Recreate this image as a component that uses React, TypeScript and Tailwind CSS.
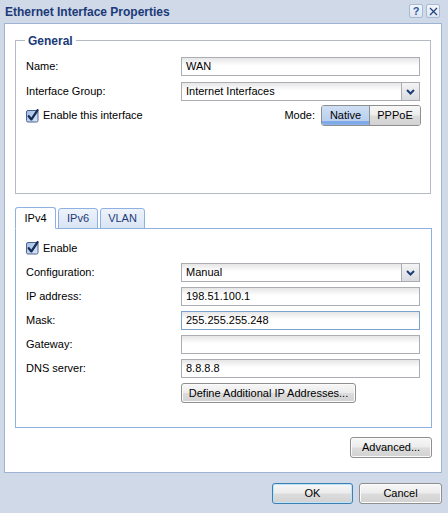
import React from "react";

const inputCls =
  "h-[19px] w-[239px] border border-[#abadb3] bg-[linear-gradient(to_bottom,#e6e6e6,#ffffff_45%)] pl-[4px] flex items-center text-black";

const buttonCls =
  "flex items-center justify-center rounded-[3px] border border-[#8e8f8f] bg-[linear-gradient(to_bottom,#f7f7f7_0%,#ececec_48%,#dcdcdc_52%,#d2d2d2_100%)] shadow-[inset_0_0_0_1px_#fbfbfb] text-black";

function CheckBox() {
  return (
    <svg width="14" height="14" viewBox="0 0 14 14" className="shrink-0">
      <defs>
        <linearGradient id="cb" x1="0" y1="0" x2="1" y2="1">
          <stop offset="0" stopColor="#9fbbe4" />
          <stop offset="1" stopColor="#dce8f7" />
        </linearGradient>
      </defs>
      <rect x="0.5" y="1.5" width="11.5" height="11.5" rx="1.5" fill="url(#cb)" stroke="#4a6591" />
      <path d="M2.8 7.2 L5.4 10.4 L11.6 1.2" stroke="#172c57" strokeWidth="2.3" fill="none" strokeLinecap="round" strokeLinejoin="round" />
    </svg>
  );
}

function Select({ value }: { value: string }) {
  return (
    <div className="flex h-[19px] w-[239px] border border-[#abadb3] bg-[linear-gradient(to_bottom,#e6e6e6,#ffffff_45%)]">
      <div className="flex flex-1 items-center pl-[4px] text-black">{value}</div>
      <div className="flex w-[18px] items-center justify-center border-l border-[#abadb3] bg-[linear-gradient(to_bottom,#f4f4f4,#d9dbe0)]">
        <svg width="9" height="6" viewBox="0 0 9 6">
          <path d="M1 1 L4.5 4.5 L8 1" stroke="#1d3c78" strokeWidth="2" fill="none" />
        </svg>
      </div>
    </div>
  );
}

function Row({ label, children, className = "" }: { label: string; children: React.ReactNode; className?: string }) {
  return (
    <div className={`flex items-center ${className}`}>
      <div className="w-[155px] text-black">{label}</div>
      {children}
    </div>
  );
}

export default function App() {
  return (
    <div className="h-[513px] w-[448px] overflow-hidden bg-[#cfd9e7] font-['Liberation_Sans',Arial,sans-serif] text-[11px]">
      {/* Title bar */}
      <div className="flex h-[23px] items-start justify-between pl-[5px] pr-[8px]">
        <div className="pt-[3px] text-[12px] font-bold text-[#1b3a78]">Ethernet Interface Properties</div>
        <div className="flex gap-[3px] pt-[4px]">
          <div className="flex h-[14px] w-[14px] items-center justify-center rounded-[2px] border border-[#a8b9d3] bg-[linear-gradient(to_bottom,#f3f6fb,#dce5f2)] text-[11px] font-bold leading-none text-[#2c5aa8]">
            ?
          </div>
          <div className="flex h-[14px] w-[14px] items-center justify-center rounded-[2px] border border-[#a8b9d3] bg-[linear-gradient(to_bottom,#f3f6fb,#dce5f2)]">
            <svg width="9" height="9" viewBox="0 0 9 9">
              <path d="M1 1 L8 8 M8 1 L1 8" stroke="#1f3f7a" strokeWidth="1.2" />
            </svg>
          </div>
        </div>
      </div>

      {/* Main panel */}
      <div className="ml-[4px] flex h-[450px] w-[438px] flex-col border border-[#9fb3d2] bg-white">
        {/* General */}
        <div className="relative ml-[10px] mt-[16px] h-[154px] w-[416px] border border-[#b5bac4] pl-[10px] pt-[16px]">
          <div className="absolute -top-[9px] left-[9px] bg-white px-[3px] text-[12px] font-bold text-[#1b3a78]">
            General
          </div>
          <Row label="Name:">
            <div className={inputCls}>WAN</div>
          </Row>
          <Row label="Interface Group:" className="mt-[6px]">
            <Select value="Internet Interfaces" />
          </Row>
          <div className="mt-[4px] flex h-[21px] items-center">
            <CheckBox />
            <span className="ml-[3px] text-black">Enable this interface</span>
            <div className="ml-auto mr-[9px] flex items-center">
              <span className="mr-[6px] text-black">Mode:</span>
              <div className="flex h-[21px] overflow-hidden rounded-[3px] border border-[#8e8f8f]">
                <div className="flex w-[48px] items-center justify-center border-r border-[#8e8f8f] bg-[linear-gradient(to_bottom,#cfdff3_0%,#b9cfee_80%,#76a3e6_82%,#8fb4ea_100%)] text-black">
                  Native
                </div>
                <div className="flex w-[50px] items-center justify-center bg-[linear-gradient(to_bottom,#f7f7f7_0%,#ececec_48%,#dcdcdc_52%,#d2d2d2_100%)] text-black">
                  PPPoE
                </div>
              </div>
            </div>
          </div>
        </div>

        {/* Tabs */}
        <div className="relative z-10 ml-[10px] mt-[13px] flex h-[22px] items-end gap-[2px] -mb-px">
          <div className="flex h-[22px] w-[41px] items-center justify-center rounded-t-[3px] border border-b-white border-[#8fb0e2] bg-white text-black">
            IPv4
          </div>
          <div className="flex h-[21px] w-[40px] items-center justify-center rounded-t-[3px] border border-[#8fb0e2] bg-[linear-gradient(to_bottom,#eef3fb,#d9e4f4)] text-[#1b3a78]">
            IPv6
          </div>
          <div className="flex h-[21px] w-[45px] items-center justify-center rounded-t-[3px] border border-[#8fb0e2] bg-[linear-gradient(to_bottom,#eef3fb,#d9e4f4)] text-[#1b3a78]">
            VLAN
          </div>
        </div>
        <div className="ml-[10px] h-[200px] w-[417px] border border-[#8fb0e2] pl-[10px] pt-[12px]">
          <div className="flex h-[14px] items-center">
            <CheckBox />
            <span className="ml-[3px] text-black">Enable</span>
          </div>
          <Row label="Configuration:" className="mt-[8px]">
            <Select value="Manual" />
          </Row>
          <Row label="IP address:" className="mt-[5px]">
            <div className={inputCls}>198.51.100.1</div>
          </Row>
          <Row label="Mask:" className="mt-[5px]">
            <div className={`${inputCls} !border-[#7da2ce]`}>255.255.255.248</div>
          </Row>
          <Row label="Gateway:" className="mt-[5px]">
            <div className={inputCls}></div>
          </Row>
          <Row label="DNS server:" className="mt-[5px]">
            <div className={inputCls}>8.8.8.8</div>
          </Row>
          <div className="mt-[5px] flex">
            <div className="w-[155px]" />
            <div className={`${buttonCls} h-[20px] w-[175px]`}>Define Additional IP Addresses...</div>
          </div>
        </div>

        <div className="mt-[9px] flex w-[427px] justify-end">
          <div className={`${buttonCls} h-[21px] w-[82px]`}>Advanced...</div>
        </div>
      </div>

      {/* Bottom buttons */}
      <div className="ml-[4px] mt-[10px] flex w-[438px] justify-end gap-[6px]">
        <div className="flex h-[21px] w-[81px] items-center justify-center rounded-[3px] border border-[#3c7fb1] bg-[linear-gradient(to_bottom,#f7f7f7_0%,#ececec_48%,#dcdcdc_52%,#d2d2d2_100%)] shadow-[inset_0_0_0_1px_#bfe3f8] text-black">
          OK
        </div>
        <div className={`${buttonCls} h-[21px] w-[83px]`}>Cancel</div>
      </div>
    </div>
  );
}
